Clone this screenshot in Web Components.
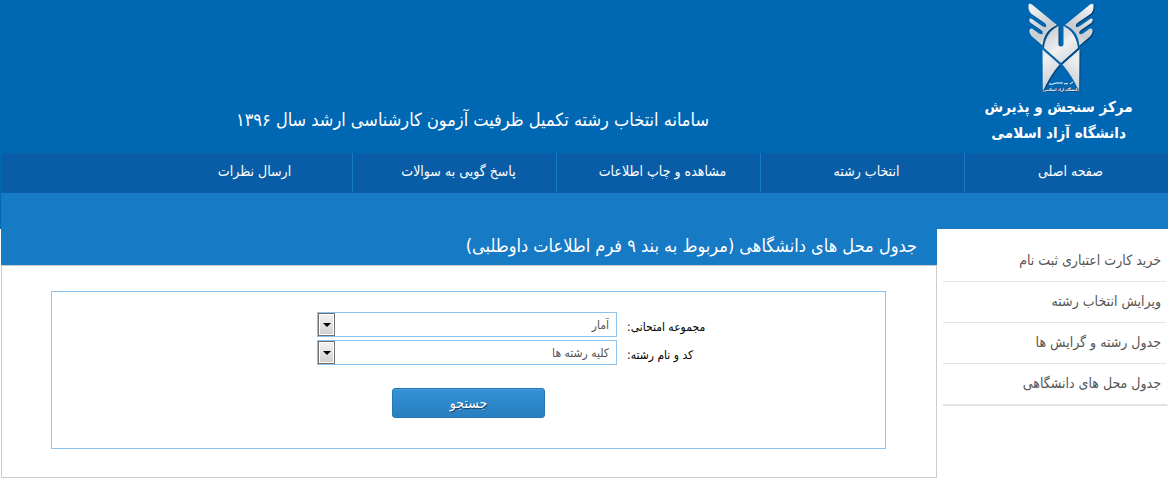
<!DOCTYPE html>
<html lang="fa" dir="rtl">
<head>
<meta charset="utf-8">
<title>سامانه انتخاب رشته</title>
<style>
	body { margin: 0; background: #fff; color: #000; font-family: "DejaVu Sans Condensed", "DejaVu Sans", sans-serif; }
</style>
</head>
<body>

<x-header>
	<span slot="org">مرکز سنجش و پذیرش</span>
	<span slot="university">دانشگاه آزاد اسلامی</span>
	سامانه انتخاب رشته تکمیل ظرفیت آزمون کارشناسی ارشد سال ۱۳۹۶
</x-header>
<x-nav>
	<x-nav-item>صفحه اصلی</x-nav-item>
	<x-nav-item>انتخاب رشته</x-nav-item>
	<x-nav-item>مشاهده و چاپ اطلاعات</x-nav-item>
	<x-nav-item>پاسخ گویی به سوالات</x-nav-item>
	<x-nav-item>ارسال نظرات</x-nav-item>
</x-nav>
<x-layout>
	<x-menu slot="side">
		<x-menu-item>خرید کارت اعتباری ثبت نام</x-menu-item>
		<x-menu-item>ویرایش انتخاب رشته</x-menu-item>
		<x-menu-item>جدول رشته و گرایش ها</x-menu-item>
		<x-menu-item>جدول محل های دانشگاهی</x-menu-item>
	</x-menu>
	<x-panel>
		<span slot="title">جدول محل های دانشگاهی (مربوط به بند ۹ فرم اطلاعات داوطلبی)</span>
		<x-search-form>
			<x-field label="مجموعه امتحانی:" value="آمار"></x-field>
			<x-field label="کد و نام رشته:" value="کلیه رشته ها"></x-field>
			<span slot="submit">جستجو</span>
		</x-search-form>
	</x-panel>
</x-layout>

<script>
class XElement extends HTMLElement {
	connectedCallback () {
		if (this.shadowRoot) return;
		this.attachShadow({ mode: 'open' });
		const template = document.createElement('template');
		template.innerHTML = `<style>* { box-sizing: border-box; } ${this.constructor.style}</style>${this.constructor.template}`;
		this.shadowRoot.appendChild(template.content.cloneNode(true));
		this.init();
	}
	init () {}
}


class XLogo extends XElement {
	static style = `
		:host { display: block; }
		svg { display: block; width: 70px; height: 94px; }
	`;
	static template = `
		<svg viewBox="0 0 70 94" aria-hidden="true">
			<defs>
				<linearGradient id="metal" x1="0" y1="0" x2="70" y2="94" gradientUnits="userSpaceOnUse">
					<stop offset="0" stop-color="#fff"/>
					<stop offset=".3" stop-color="#c6ccd2"/>
					<stop offset=".5" stop-color="#eef0f2"/>
					<stop offset=".75" stop-color="#c3cad1"/>
					<stop offset="1" stop-color="#f4f6f7"/>
				</linearGradient>
				<g id="half">
					<path d="M2.5 5 Q3 3 6 4.500 L31 25 Q24 28 20 34 Q17 39 16.500 45.500 L6 36.500 Q3 33 3.500 30 Q4 28 6 28.500 L13 33.500 Q16 35 16.700 33.500 Q17.500 31.500 15 30 L5.500 23.500 Q3 21.500 3.200 19.500 Q4 18 6 19 L16 26 Q19 28 20 26.500 Q21 24.500 18 22.500 L5.500 14 Q2 11 2.500 5Z"/>
					<path d="M16.500 49.500 L33.500 64.500 Q23 77 16.800 92Z"/>
				</g>
				<g id="emblem">
					<use href="#half"/>
					<use href="#half" transform="translate(70 0) scale(-1 1)"/>
					<path d="M32.500 26 C24 30 19 38 18 48 L35 63 L52 48 C51 38 46 30 37.500 26 L37.500 44 Q37.500 46.500 35 46.500 Q32.500 46.500 32.500 44Z"/>
				</g>
			</defs>
			<use href="#emblem" fill="#0a3157" opacity=".75" transform="translate(1 1)"/>
			<use href="#emblem" fill="url(#metal)"/>
			<path d="M23 84 q3 1 7 -1 h7 M38 84 q2 -1 4 0 M44 84 l3 -2" fill="none" stroke="#fff"/>
			<text x="35" y="91" fill="#fff" stroke="#0a4a80" stroke-width="1" paint-order="stroke" font-size="4" text-anchor="middle">دانشگاه آزاد اسلامی</text>
		</svg>
	`;
}
customElements.define('x-logo', XLogo);


class XHeader extends XElement {
	static style = `
		:host { display: grid; grid-template-columns: 194px 1fr; height: 153px; background: #0067b3; color: #fff; }
		.brand { display: flex; flex-direction: column; align-items: center; font-size: 15px; line-height: 26px; font-weight: bold; white-space: nowrap; padding-inline-start: 25px; }
		.brand x-logo { margin-inline-end: 4px; }
		h1 { align-self: end; margin: 0; padding: 0 265px 18px 0; font-size: 18px; line-height: 30px; font-weight: normal; white-space: nowrap; }
	`;
	static template = `
		<div class="brand">
			<x-logo></x-logo>
			<slot name="org"></slot>
			<slot name="university"></slot>
		</div>
		<h1><slot></slot></h1>
	`;
}
customElements.define('x-header', XHeader);


class XNav extends XElement {
	static style = `
		:host { display: block; border-left: 1px solid #0067b3; }
		nav { display: flex; height: 40px; background: #095da6; }
	`;
	static template = `<nav><slot></slot></nav>`;
}
customElements.define('x-nav', XNav);


class XNavItem extends XElement {
	static style = `
		:host { display: block; flex: 0 0 203px; height: 39px; border-left: 1px solid #177ac4; }
		:host(:last-child) { border-color: transparent; }
		a { display: block; padding-left: 8px; color: #fff; text-decoration: none; text-align: center; font-size: 14px; line-height: 36px; white-space: nowrap; }
	`;
	static template = `<a href="#"><slot></slot></a>`;
}
customElements.define('x-nav-item', XNavItem);


class XLayout extends XElement {
	static style = `
		:host { display: block; }
		.band { height: 36px; border-left: 1px solid #0067b3; background: #177ac4; }
		.columns { display: grid; grid-template-columns: 231px 1fr; align-items: start; }
	`;
	static template = `
		<div class="band"></div>
		<div class="columns">
			<slot name="side"></slot>
			<main><slot></slot></main>
		</div>
	`;
}
customElements.define('x-layout', XLayout);


class XMenu extends XElement {
	static style = `
		:host { display: block; padding: 12px 0 0 6px; }
		nav { border-bottom: 1px solid #e3e3e3; }
	`;
	static template = `<nav><slot></slot></nav>`;
}
customElements.define('x-menu', XMenu);


class XMenuItem extends XElement {
	static style = `
		:host { display: block; margin-inline-start: 2px; border-bottom: 1px solid #e3e3e3; }
		a { display: block; padding: 0 5px 2px 0; color: #555; text-decoration: none; font-size: 14px; line-height: 38px; white-space: nowrap; }
	`;
	static template = `<a href="#"><slot></slot></a>`;
}
customElements.define('x-menu-item', XMenuItem);


class XPanel extends XElement {
	static style = `
		:host { display: block; margin-left: 1px; }
		h2 { margin: 0; padding: 0 20px 2px; background: #177ac4; color: #fff; font-size: 18px; line-height: 34px; font-weight: normal; white-space: nowrap; }
		.body { border: 1px solid #ccc; padding: 25px 50px 28px 49px; }
	`;
	static template = `
		<h2><slot name="title"></slot></h2>
		<div class="body"><slot></slot></div>
	`;
}
customElements.define('x-panel', XPanel);


class XSearchForm extends XElement {
	static style = `
		:host { display: block; }
		form { border: 1px solid #8cc4f0; padding: 20px 0 30px; }
		.fields { display: grid; gap: 3px; padding-inline-start: 179px; }
		button { display: block; width: 153px; height: 30px; margin: 23px auto 0; padding: 0; border: 1px solid #2277b5; border-radius: 3px; background: linear-gradient(#3492d6, #287fbf); box-shadow: inset 0 1px #4a9fdb; color: #fff; font: inherit; font-size: 14px; line-height: 28px; text-shadow: 1px 1px 1px #0008; }
	`;
	static template = `
		<form>
			<div class="fields"><slot></slot></div>
			<button type="button"><slot name="submit"></slot></button>
		</form>
	`;
}
customElements.define('x-search-form', XSearchForm);


class XField extends XElement {
	static style = `
		:host { display: grid; grid-template-columns: 79px 300px; column-gap: 10px; align-items: center; }
		label { padding-top: 6px; font-size: 12px; line-height: 19px; text-align: end; white-space: nowrap; }
		.box { display: grid; }
		select, .arrow { grid-area: 1 / 1; }
		select { appearance: none; width: 100%; height: 25px; margin: 0; padding: 0 7px; border: 1px solid #8cc4f0; border-radius: 0; background: #fff; color: #555; font: inherit; font-size: 12px; }
		.arrow { justify-self: end; display: flex; align-items: center; justify-content: center; width: 17px; height: 23px; margin: 1px; border: 1px solid #707070; background: linear-gradient(#f4f4f4, #cfcfcf); box-shadow: inset 0 0 0 1px #fff; pointer-events: none; }
		.arrow::before { content: ''; border: 4px solid transparent; border-top-color: #000; border-bottom: 0; }
	`;
	static template = `
		<label for="list"></label>
		<div class="box"><select id="list"><option></option></select><span class="arrow"></span></div>
	`;

	init () {
		this.shadowRoot.querySelector('label').textContent = this.getAttribute('label');
		this.shadowRoot.querySelector('option').textContent = this.getAttribute('value');
	}
}
customElements.define('x-field', XField);
</script>
</body>
</html>
